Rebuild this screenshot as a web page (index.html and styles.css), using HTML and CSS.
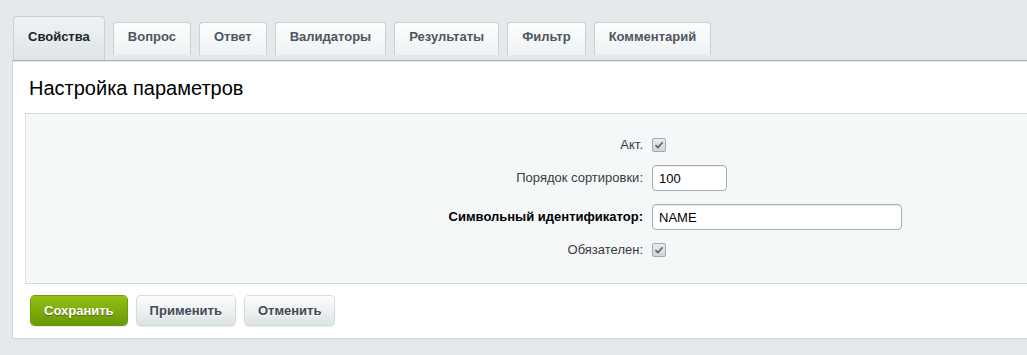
FILE: index.html
```html
<!DOCTYPE html>
<html>
<head>
    <meta charset="UTF-8">
    <meta name="viewport" content="width=device-width, initial-scale=1">
    <title>Настройка параметров</title>
    <link rel="stylesheet" href="styles.css">
</head>
<body>
    <div class="page">
        <!-- Вкладки -->
        <div class="tabs">
            <div class="tab tab-active">Свойства</div>
            <div class="tab">Вопрос</div>
            <div class="tab">Ответ</div>
            <div class="tab">Валидаторы</div>
            <div class="tab">Результаты</div>
            <div class="tab">Фильтр</div>
            <div class="tab">Комментарий</div>
        </div>

        <div class="panel">
            <h2 class="panel-title">Настройка параметров</h2>

            <div class="form-box">
                <label class="form-label">Акт.</label>
                <div class="form-field">
                    <span class="check">
                        <svg width="10" height="10" viewBox="0 0 10 10"><path d="M1.5 5.2 L4 7.6 L8.6 2.2" fill="none" stroke="#56606a" stroke-width="1.6"/></svg>
                    </span>
                </div>

                <label class="form-label">Порядок сортировки:</label>
                <div class="form-field">
                    <input class="text-input input-short" type="text" value="100">
                </div>

                <label class="form-label form-label-bold">Символьный идентификатор:</label>
                <div class="form-field">
                    <input class="text-input input-long" type="text" value="NAME">
                </div>

                <label class="form-label">Обязателен:</label>
                <div class="form-field">
                    <span class="check">
                        <svg width="10" height="10" viewBox="0 0 10 10"><path d="M1.5 5.2 L4 7.6 L8.6 2.2" fill="none" stroke="#56606a" stroke-width="1.6"/></svg>
                    </span>
                </div>
            </div>

            <!-- Кнопки -->
            <div class="buttons">
                <button class="btn btn-save">Сохранить</button>
                <button class="btn">Применить</button>
                <button class="btn">Отменить</button>
            </div>
        </div>
    </div>
</body>
</html>
```

FILE: styles.css
```css
/* Общие стили */
body {
    margin: 0;
    padding: 0;
    background: #e4eaeb;
    font-family: "Liberation Sans", Arial, sans-serif;
    overflow: hidden;
}

.page {
    padding: 16px 0 0 12px;
}

/* Вкладки */
.tabs {
    display: flex;
    align-items: flex-start;
    gap: 8px;
    height: 44px;
    margin-left: 1px;
}

.tab {
    height: 28px;
    margin-top: 6px;
    padding: 4px 14px 0;
    line-height: 20px;
    font-size: 13px;
    font-weight: bold;
    color: #4b5761;
    background: linear-gradient(to bottom, #fdfefe, #eef2f3);
    border: 1px solid #c9d1d3;
    border-bottom: none;
    border-radius: 4px 4px 0 0;
}

.tab-active {
    height: 33px;
    margin-top: 0;
    padding-top: 10px;
    color: #1d2429;
    background: linear-gradient(to bottom, #eef2f3, #dfe6e8);
}

/* Панель */
.panel {
    background: #fff;
    border-top: 1px solid #a9b3b6;
    border-left: 1px solid #ccd4d6;
    border-bottom: 1px solid #cfd6d8;
    box-shadow: inset 0 1px 0 #e3e8e9;
    padding: 0 0 13px 0;
}

.panel-title {
    margin: 0;
    padding: 15px 0 0 16px;
    font-size: 20px;
    line-height: 24px;
    font-weight: normal;
    color: #000;
}

/* Блок формы */
.form-box {
    display: grid;
    grid-template-columns: 617px 1fr;
    column-gap: 9px;
    row-gap: 13px;
    align-items: center;
    margin: 13px 0 0 12px;
    padding: 24px 0 26px 0;
    background: #f5f8f9;
    border-top: 1px solid #d3dadc;
    border-left: 1px solid #dde3e5;
    border-bottom: 1px solid #d3dadc;
}

.form-label {
    text-align: right;
    font-size: 13px;
    line-height: 14px;
    color: #3b3b3b;
}

.form-label-bold {
    font-weight: bold;
    color: #000;
}

.form-field {
    display: flex;
    align-items: center;
}

.check {
    display: flex;
    align-items: center;
    justify-content: center;
    width: 12px;
    height: 12px;
    border: 1px solid #a2aaae;
    border-radius: 2px;
    background: linear-gradient(to bottom, #e9ecee, #cfd5d8);
}

.text-input {
    box-sizing: border-box;
    height: 26px;
    padding: 0 6px;
    border: 1px solid #a7aeb1;
    border-radius: 4px;
    background: #fff;
    box-shadow: inset 0 1px 1px rgba(0, 0, 0, 0.08);
    font-family: "Liberation Sans", Arial, sans-serif;
    font-size: 13px;
    color: #000;
}

.input-short {
    width: 75px;
}

.input-long {
    width: 250px;
}

/* Кнопки */
.buttons {
    display: flex;
    gap: 10px;
    margin: 12px 0 0 18px;
}

.btn {
    height: 29px;
    padding: 0 13px;
    border: none;
    border-radius: 4px;
    font-family: "Liberation Sans", Arial, sans-serif;
    font-size: 13px;
    font-weight: bold;
    color: #3f4b54;
    text-shadow: 0 1px 0 #fff;
    background: linear-gradient(to bottom, #fdfefe, #dce3e5);
    box-shadow: 0 0 0 1px #d3dbdd, 0 1px 2px rgba(0, 0, 0, 0.25);
}

.btn-save {
    color: #fff;
    text-shadow: 0 1px 1px rgba(0, 0, 0, 0.35);
    background: linear-gradient(to bottom, #93c013, #699807);
    box-shadow: 0 0 0 1px #6f9a0a, 0 1px 2px rgba(0, 0, 0, 0.3);
}
```
